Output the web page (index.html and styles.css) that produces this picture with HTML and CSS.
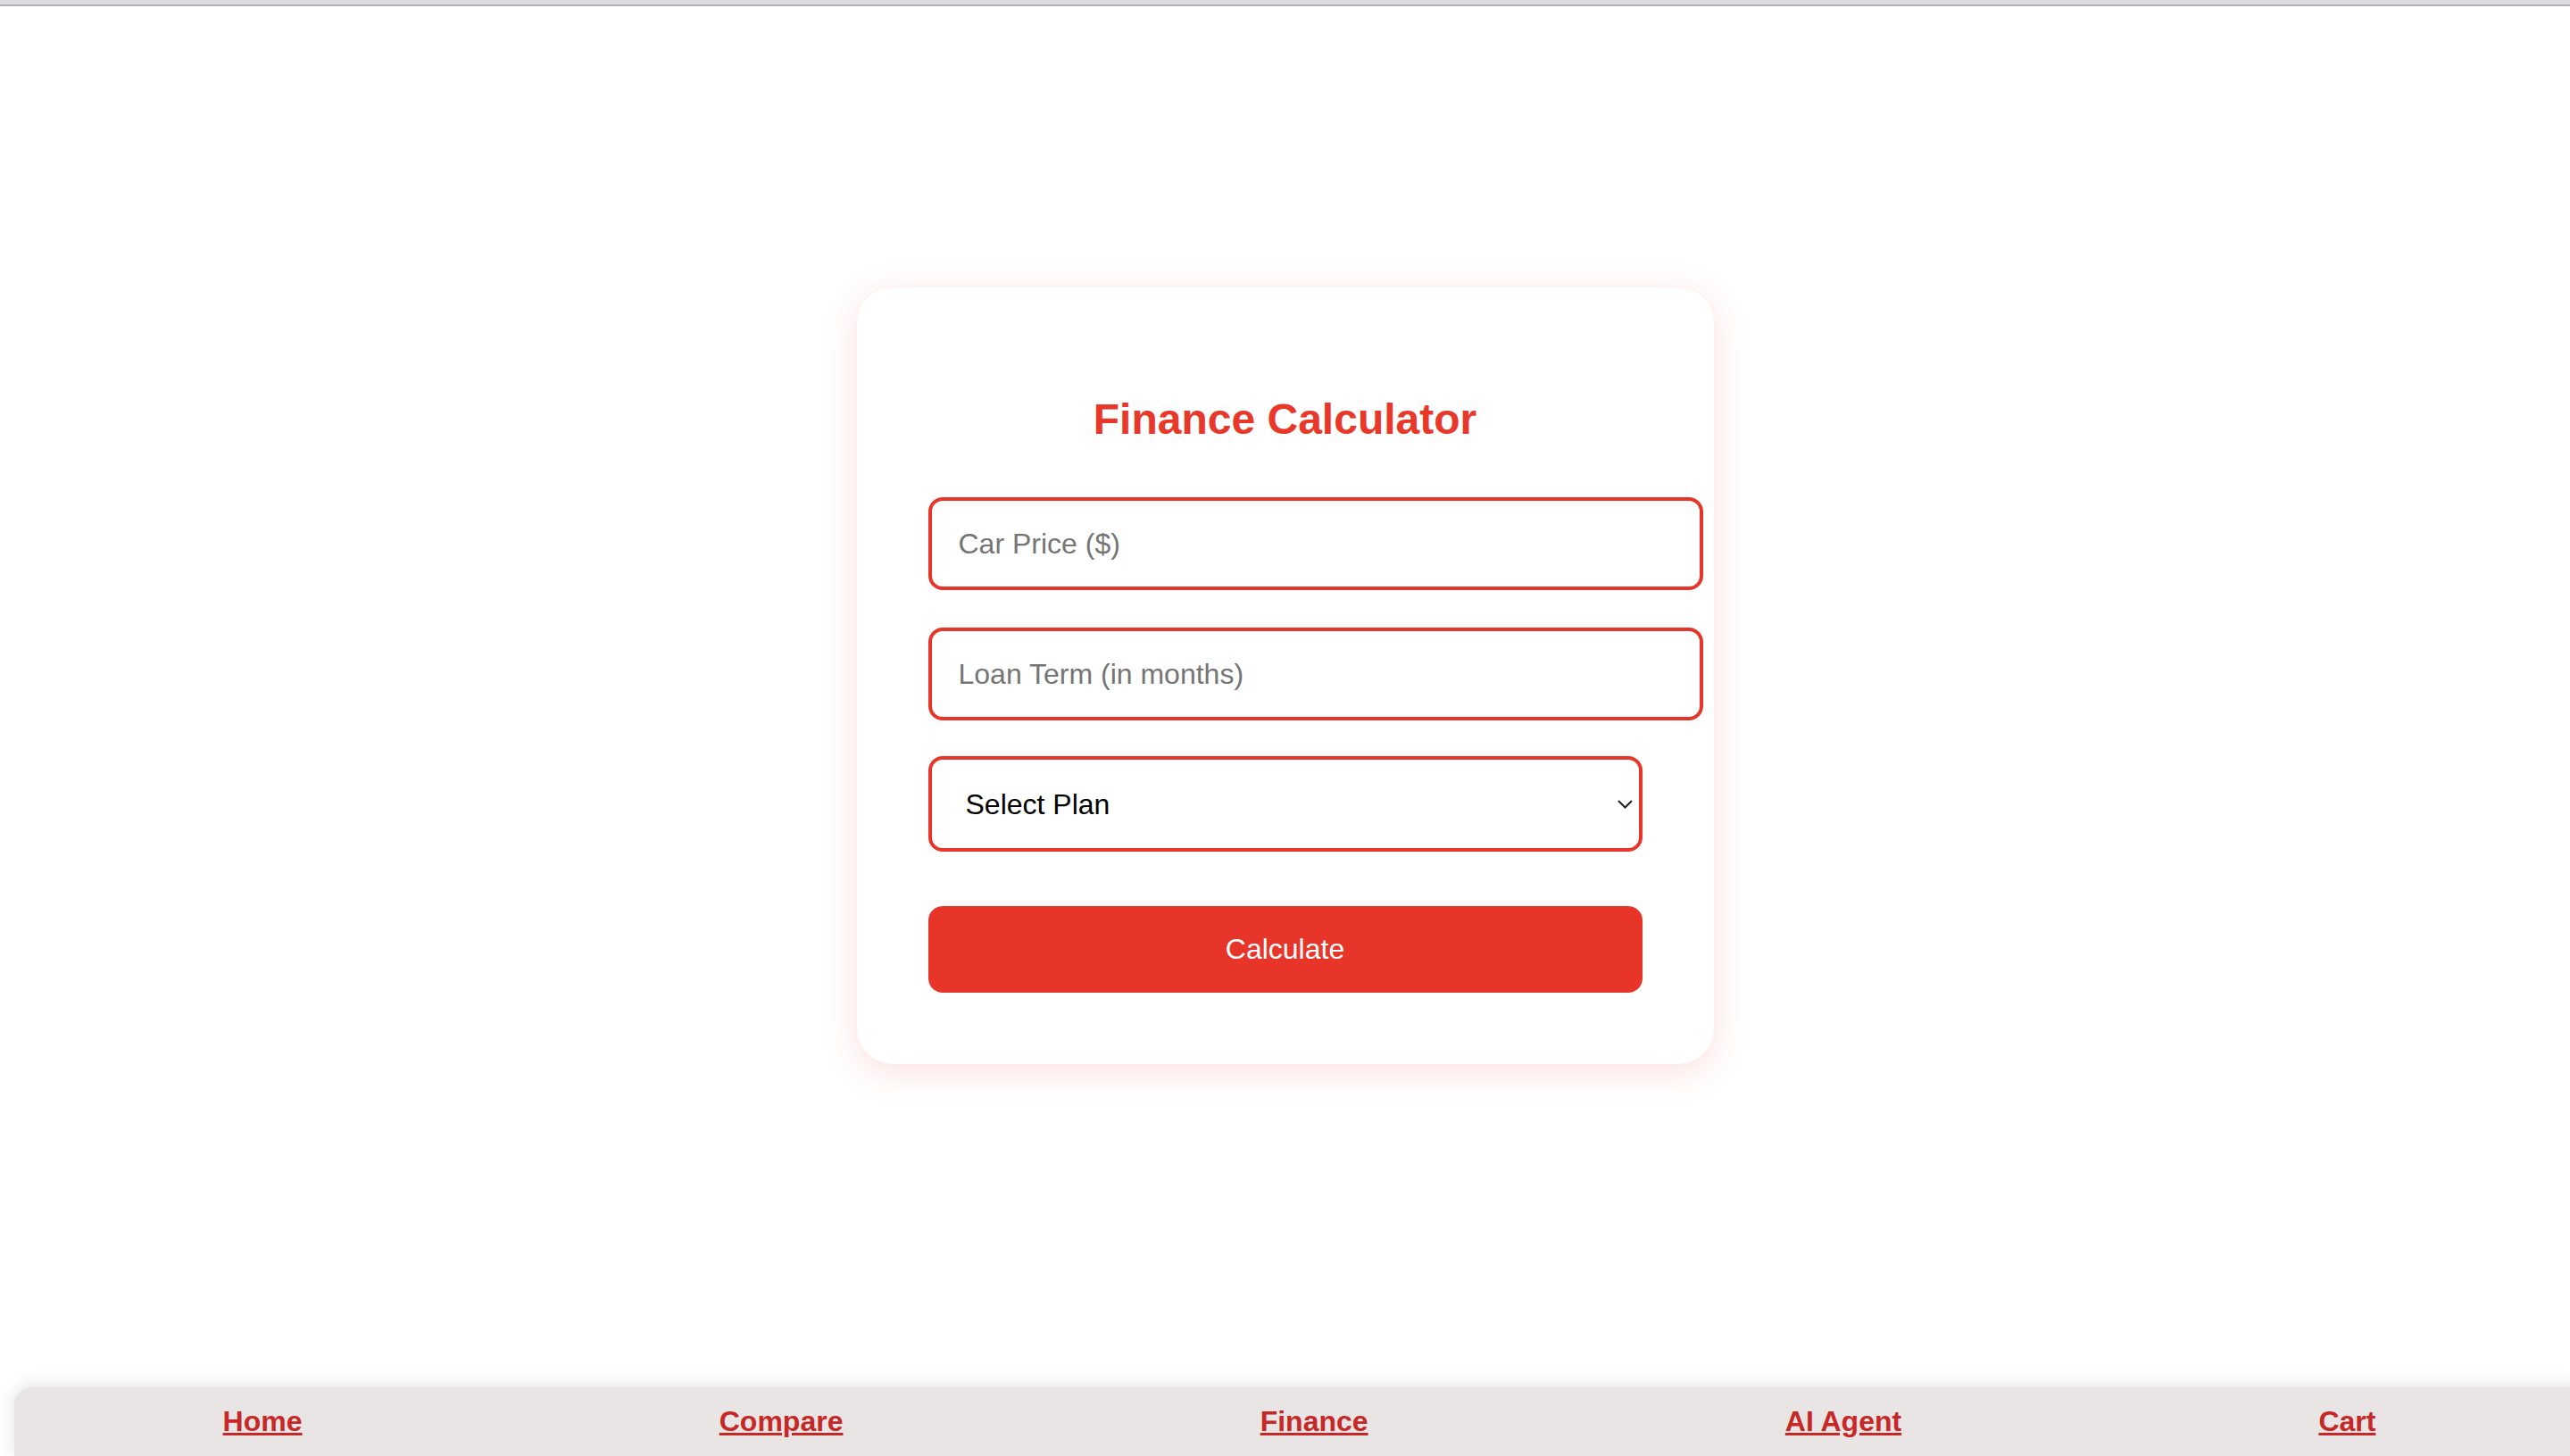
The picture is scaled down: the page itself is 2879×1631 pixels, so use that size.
FILE: index.html
```html
<!DOCTYPE html>
<html>
<head>
    <meta charset="UTF-8">
    <title>Finance Calculator</title>
    <link rel="stylesheet" href="styles.css">
</head>
<body>
    <div class="top-edge"></div>
    <div class="main">
        <div class="calculator-card">
            <h2>Finance Calculator</h2>
            <div class="calc-form">
                <input type="number" class="field" id="car-price" placeholder="Car Price ($)" />
                <input type="number" class="field" id="loan-term" placeholder="Loan Term (in months)" />
                <div class="select-wrap">
                    <select class="plan-select" id="plan">
                        <option>Select Plan</option>
                        <option>Basic</option>
                        <option>Standard</option>
                        <option>Premium</option>
                    </select>
                    <svg class="select-arrow" width="17" height="10" viewBox="0 0 17 10">
                        <path d="M1 1 L8.5 8.5 L16 1" fill="none" stroke="#1f1f1f" stroke-width="2"/>
                    </svg>
                </div>
                <button class="calc-button">Calculate</button>
            </div>
        </div>
    </div>
    <div class="bottom-nav">
        <a href="#">Home</a>
        <a href="#">Compare</a>
        <a href="#">Finance</a>
        <a href="#">AI Agent</a>
        <a href="#">Cart</a>
    </div>
</body>
</html>
```

FILE: styles.css
```css
html {
    overflow-x: hidden;
}

body {
    margin: 0;
    background-color: #fff;
    font-family: "Liberation Sans", Arial, sans-serif;
    display: flex;
    flex-direction: column;
    min-height: 100vh;
}

.top-edge {
    height: 5px;
    background-color: #dcdce0;
    border-bottom: 2px solid #b1b0b5;
}

.main {
    flex: 1;
    padding-top: 315px;
}

.calculator-card {
    width: 960px;
    box-sizing: border-box;
    margin: 0 auto;
    padding: 80px;
    background-color: #fff;
    border-radius: 40px;
    box-shadow: 0 8px 40px rgba(233, 53, 42, 0.16);
}

.calculator-card h2 {
    margin: 40px 0;
    text-align: center;
    color: #e8382a;
    font-size: 48px;
    font-weight: bold;
    line-height: 55px;
}

.calc-form {
    display: flex;
    flex-direction: column;
    align-items: flex-start;
}

.field {
    display: block;
    width: 100%;
    height: 36px;
    margin: 20px 0 22px;
    padding: 30px;
    border: 4px solid #e8352a;
    border-radius: 16px;
    font-family: inherit;
    font-size: 32px;
    color: #000;
    outline: none;
}

.field + .field {
    margin-top: 20px;
    margin-bottom: 20px;
}

.field::placeholder {
    color: #757575;
}

.field::-webkit-outer-spin-button,
.field::-webkit-inner-spin-button {
    -webkit-appearance: none;
    margin: 0;
}

.select-wrap {
    position: relative;
    width: 100%;
    margin: 20px 0;
}

.plan-select {
    display: block;
    width: 100%;
    height: 107px;
    box-sizing: border-box;
    padding: 0 40px 0 38px;
    border: 4px solid #e8352a;
    border-radius: 16px;
    background-color: #fff;
    font-family: inherit;
    font-size: 32px;
    color: #000;
    -webkit-appearance: none;
    appearance: none;
    outline: none;
}

.select-arrow {
    position: absolute;
    right: 11px;
    top: 50%;
    transform: translateY(-50%);
    pointer-events: none;
}

.calc-button {
    width: 100%;
    margin-top: 41px;
    padding: 30px 0;
    border: none;
    border-radius: 16px;
    background-color: #e8352a;
    color: #fff;
    font-family: inherit;
    font-size: 32px;
    line-height: 37px;
    cursor: pointer;
}

.bottom-nav {
    display: flex;
    justify-content: space-around;
    width: 100vw;
    margin-left: 16px;
    padding: 20px 0;
    background-color: #e9e5e5;
    border-radius: 20px 20px 0 0;
    box-shadow: 0 -2px 20px rgba(0, 0, 0, 0.12);
}

.bottom-nav a {
    color: #c62828;
    font-size: 32px;
    font-weight: bold;
    line-height: 37px;
    text-decoration: underline;
}
```
